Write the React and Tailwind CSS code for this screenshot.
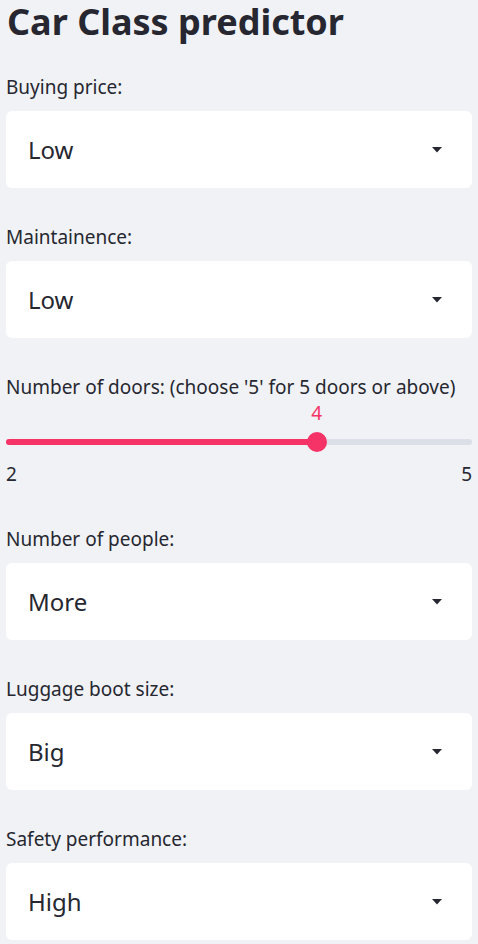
import { useState } from "react";

const fields = [
  { label: "Buying price:", value: "Low" },
  { label: "Maintainence:", value: "Low" },
];

const fields2 = [
  { label: "Number of people:", value: "More" },
  { label: "Luggage boot size:", value: "Big" },
  { label: "Safety performance:", value: "High" },
];

function Caret() {
  return (
    <svg width="10" height="6" viewBox="0 0 10 6" className="shrink-0">
      <path d="M0 0h10L5 5.5z" fill="#262730" />
    </svg>
  );
}

function SelectBox({ label, value, first }) {
  return (
    <div className={first ? "mt-[31px]" : "mt-[37px]"}>
      <div className="text-[19px] leading-[24px] text-[#262730] mb-[12px]">{label}</div>
      <div className="h-[77px] bg-white rounded-[6px] flex items-center justify-between pl-[22px] pr-[30px]">
        <span className="text-[24px] text-[#262730]">{value}</span>
        <Caret />
      </div>
    </div>
  );
}

function DoorSlider() {
  const [val] = useState(4);
  const pct = ((val - 2) / 3) * 100;
  return (
    <div className="mt-[37px] pb-[4px]">
      <div className="text-[19px] leading-[24px] text-[#262730]">
        Number of doors: (choose '5' for 5 doors or above)
      </div>
      <div className="relative h-[24px] mt-[2px]">
        <span
          className="absolute top-0 -translate-x-1/2 text-[19px] leading-[24px] text-[#f63366]"
          style={{ left: `${pct}%` }}
        >
          {val}
        </span>
      </div>
      <div className="relative h-[34px] flex items-center">
        <div className="w-full h-[6px] rounded-full bg-[#dcdfe8] overflow-hidden">
          <div className="h-full bg-[#f63366]" style={{ width: `${pct}%` }} />
        </div>
        <div
          className="absolute top-1/2 w-[20px] h-[20px] rounded-full bg-[#f63366] -translate-x-1/2 -translate-y-1/2"
          style={{ left: `${pct}%` }}
        />
      </div>
      <div className="flex justify-between mt-[3px] text-[19px] leading-[24px] text-[#262730]">
        <span>2</span>
        <span>5</span>
      </div>
    </div>
  );
}

export default function App() {
  return (
    <div className="min-h-screen bg-[#f0f2f6] px-[6px] pb-10 font-['Noto_Sans',sans-serif]">
      <h1 className="text-[36px] leading-[44px] font-bold text-[#262730] pl-[1px]">Car Class predictor</h1>
      {fields.map((f, i) => (
        <SelectBox key={f.label} label={f.label} value={f.value} first={i === 0} />
      ))}
      <DoorSlider />
      {fields2.map((f) => (
        <SelectBox key={f.label} label={f.label} value={f.value} />
      ))}
    </div>
  );
}
